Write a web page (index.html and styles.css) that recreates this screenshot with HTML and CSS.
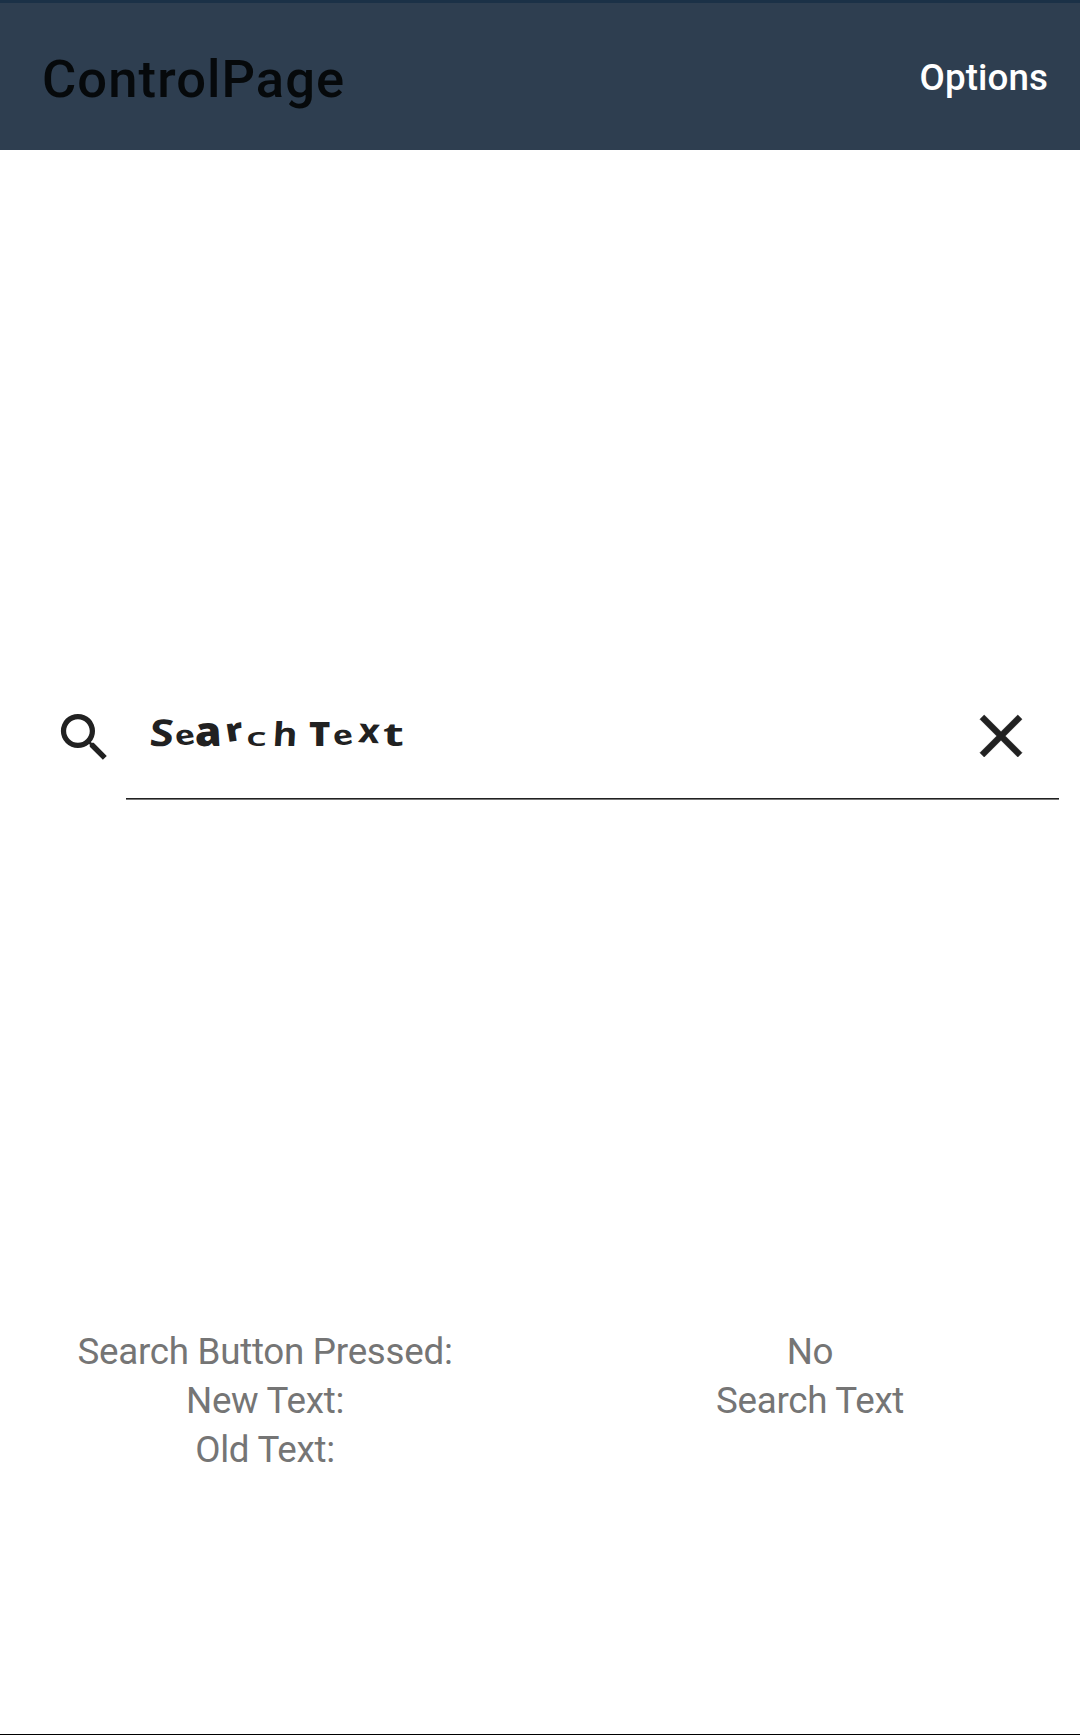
FILE: index.html
```html
<!DOCTYPE html>
<html lang="en">
<head>
<meta charset="utf-8">
<title>ControlPage</title>
<link rel="stylesheet" href="styles.css">
</head>
<body>
<header class="toolbar">
  <h1 class="title">ControlPage</h1>
  <button class="options">Options</button>
</header>
<main class="page">
  <div class="search">
    <svg class="search-icon" viewBox="0 0 24 24"><path d="M15.5 14h-.79l-.28-.27A6.471 6.471 0 0 0 16 9.5 6.5 6.5 0 1 0 9.5 16c1.61 0 3.09-.59 4.23-1.57l.27.28v.79l5 4.99L20.49 19l-4.99-5zm-6 0C7.01 14 5 11.99 5 9.5S7.01 5 9.5 5 14 7.01 14 9.5 11.99 14 9.5 14z"/></svg>
    <div class="field">
      <div class="query"><span class="g g-s">S</span><span class="g g-e">e</span><span class="g g-a">a</span><span class="g g-r">r</span><span class="g g-c">c</span><span class="g g-h">h</span><span class="space"> </span><span class="g g-t">T</span><span class="g g-e2">e</span><span class="g g-x">x</span><span class="g g-t2">t</span></div>
      <svg class="close-icon" viewBox="0 0 24 24"><path d="M19 6.41 17.59 5 12 10.59 6.41 5 5 6.41 10.59 12 5 17.59 6.41 19 12 13.41 17.59 19 19 17.59 13.41 12z"/></svg>
    </div>
  </div>
  <div class="status">
    <div class="labels"><p>Search Button Pressed:</p><p>New Text:</p><p>Old Text:</p></div>
    <div class="values"><p>No</p><p>Search Text</p></div>
  </div>
</main>
</body>
</html>
```
FILE: styles.css
```css
* { box-sizing: border-box; margin: 0; padding: 0; }
body {
  display: flex;
  flex-direction: column;
  height: 1735px;
  background: #fff;
  font-family: Roboto, sans-serif;
  border-bottom: 1px solid #000;
  overflow: hidden;
}
.toolbar {
  display: flex;
  align-items: center;
  justify-content: space-between;
  height: 150px;
  padding: 2px 32px 0 42px;
  background: #2e3e50;
  border-top: 3px solid #1b3147;
}
.title {
  padding-top: 2px;
  font-size: 52.5px;
  font-weight: 500;
  line-height: 62px;
  letter-spacing: 1.1px;
  color: #06090b;
}
.options {
  border: 0;
  background: none;
  color: #fff;
  font: 500 36.75px/44px Roboto, sans-serif;
  letter-spacing: 0.1px;
}
.page { display: flex; flex-direction: column; }
.search {
  display: flex;
  align-items: flex-start;
  margin-top: 550px;
  height: 100px;
  padding: 0 21px 0 53px;
}
.search-icon { width: 63px; height: 63px; margin-top: 6px; fill: #212121; }
.field {
  display: flex;
  justify-content: space-between;
  flex: 1;
  height: 100px;
  margin-left: 10px;
  padding: 0 22px 0 24px;
  border-bottom: 1px solid #777;
  box-shadow: inset 0 -1px #212121;
}
.close-icon { width: 72px; height: 72px; fill: #212121; stroke: #212121; stroke-width: 0.2; }
.query {
  display: flex;
  align-items: baseline;
  height: 60px;
  margin-top: 3px;
  font-family: "Open Sans", sans-serif;
  font-weight: 800;
  color: #212121;
  line-height: 54px;
}
.g { transform-origin: left 70%; }
.space { width: 0; white-space: pre; }
.g-s { width: 27px; font-size: 37px; font-weight: 700; transform: translateX(-1px) scaleX(1.18) skewX(-4deg); }
.g-e { width: 20px; font-size: 27px; font-weight: 700; transform: scaleX(1.25) rotate(-10deg); }
.g-a { width: 30px; font-size: 41px; transform: translateX(-2px) scaleX(1.05) skewX(3deg); }
.g-r { width: 20px; font-size: 32px; transform: translateY(-4px) scaleX(1.15) rotate(-8deg); }
.g-c { width: 25px; font-size: 26px; font-weight: 600; transform: translateX(-1px) scaleX(1.6); }
.g-h { width: 37px; font-size: 33px; font-weight: 700; transform: scaleX(1.15) skewX(-3deg); }
.g-t { width: 26px; font-size: 33.5px; transform: scaleX(1.08); }
.g-e2 { width: 23px; font-size: 27px; font-weight: 700; transform: scaleX(1.25) rotate(-10deg); }
.g-x { width: 25px; font-size: 34px; font-weight: 700; transform: translateY(-4px) scaleX(1.08) rotate(4deg); }
.g-t2 { width: 20px; font-size: 33px; font-weight: 700; transform: scaleX(1.45); }
.status {
  display: grid;
  grid-template-columns: 1fr 1fr;
  margin-top: 527px;
  font-size: 36.75px;
  line-height: 49px;
  letter-spacing: -0.27px;
  text-align: center;
  color: #757575;
}
.labels { padding-right: 10px; }
```
